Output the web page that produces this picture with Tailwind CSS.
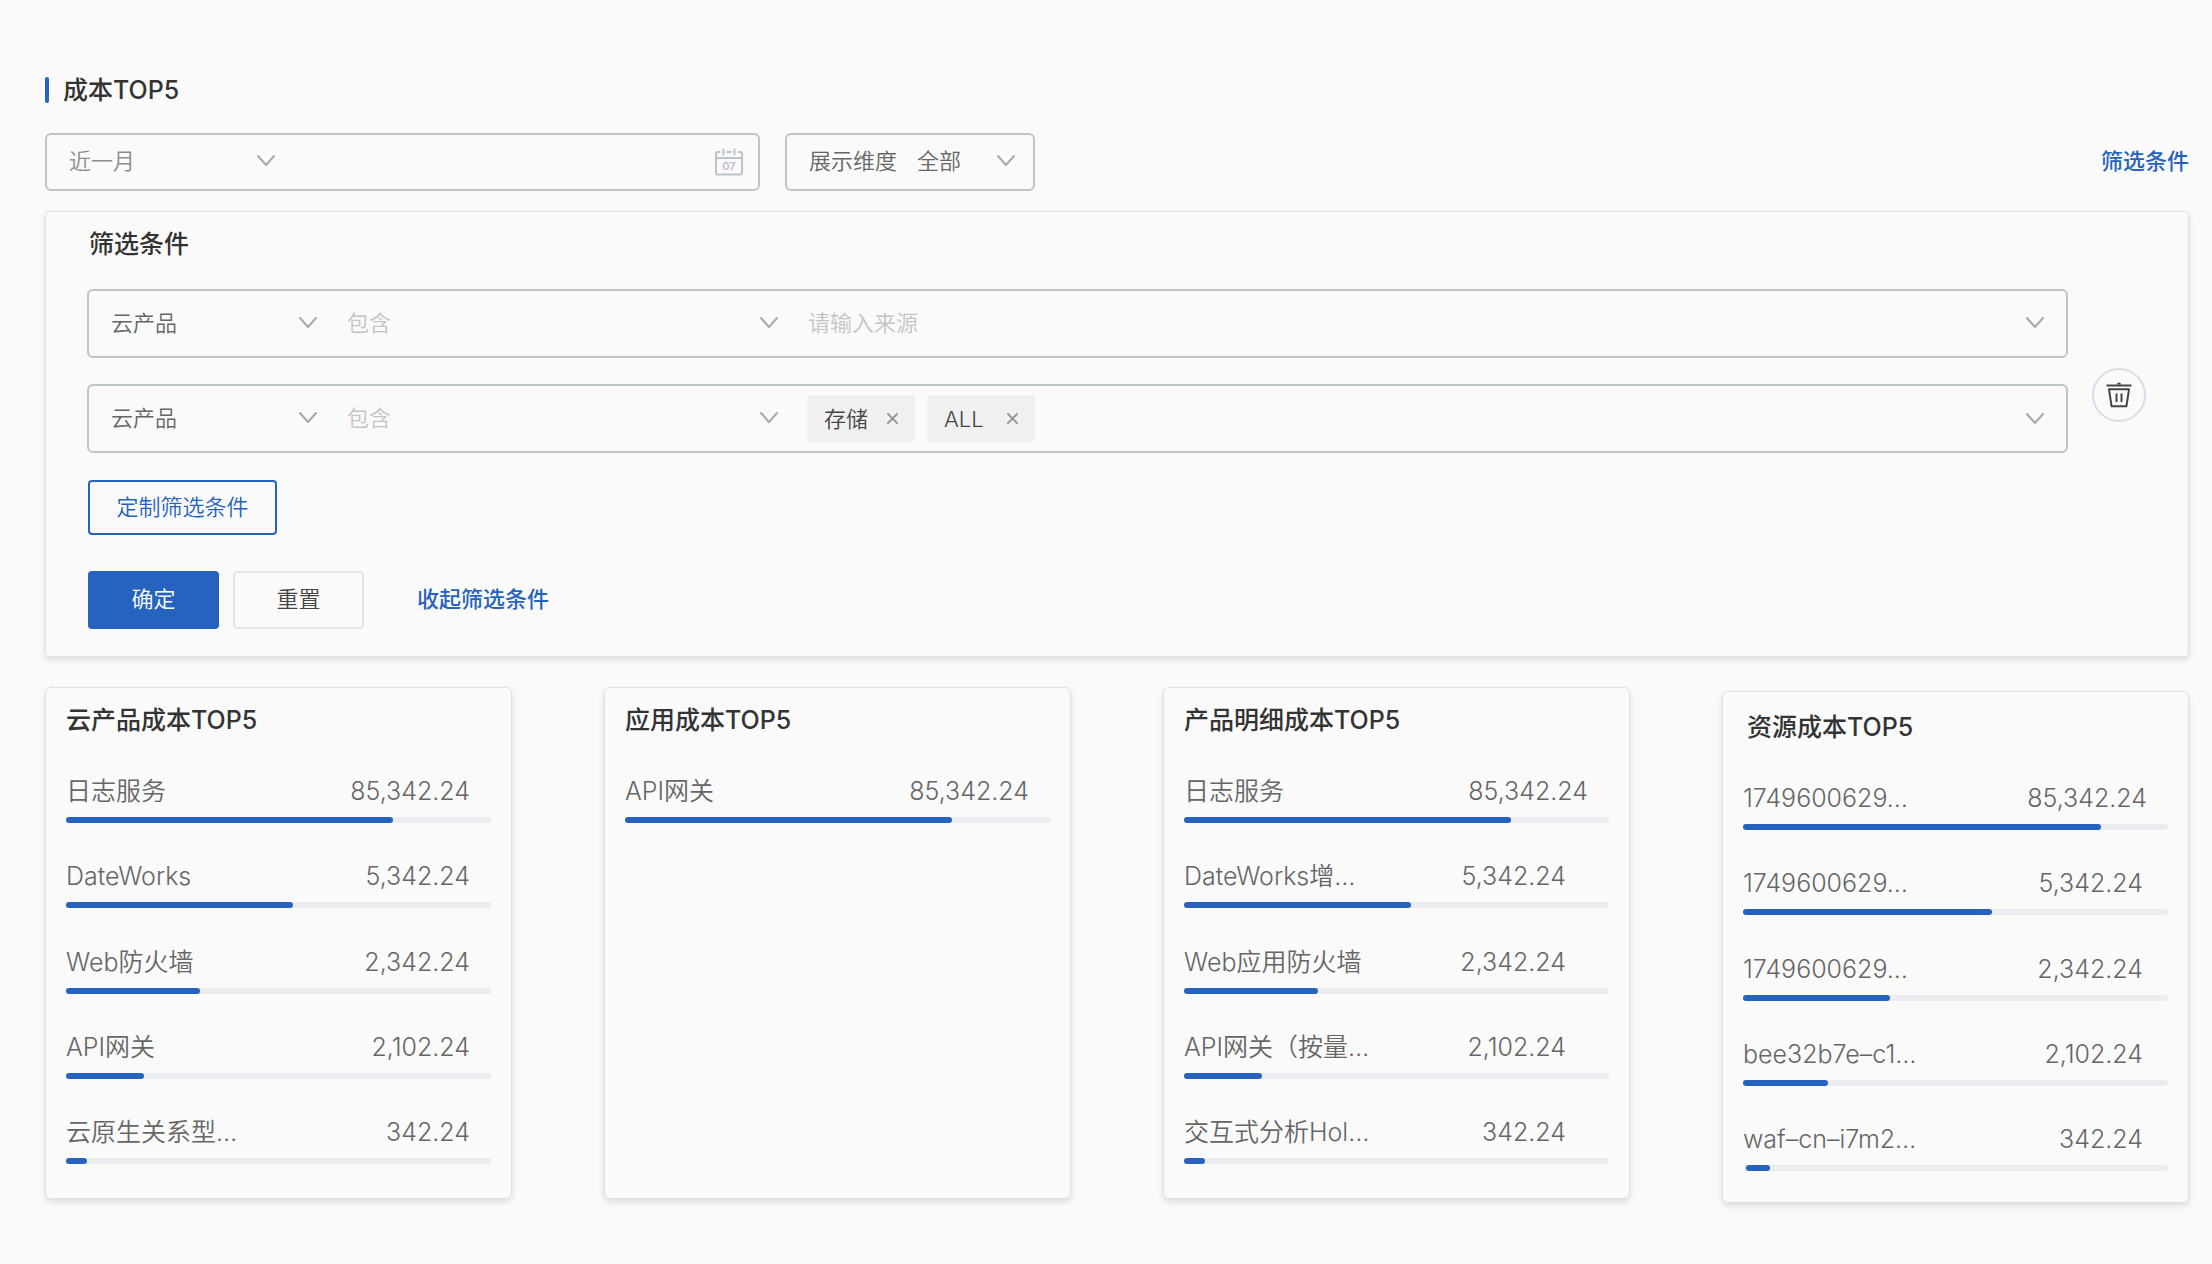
<!DOCTYPE html>
<html lang="zh-CN">
<head>
    <meta charset="UTF-8">
    <meta name="viewport" content="width=device-width, initial-scale=1.0">
    <title>成本TOP5</title>
    <script src="https://cdn.jsdelivr.net/npm/@tailwindcss/browser@4"></script>
</head>
<body class="bg-[#fafafa] font-['Inter','Noto_Sans_CJK_SC',sans-serif] text-[22px] leading-8 font-[350] text-[#666]">
    <!-- Icons -->
    <svg class="hidden">
        <symbol id="chevron" viewBox="0 0 18 12">
            <path d="M1 1l8 9 8-9" fill="none" stroke="currentColor" stroke-width="2" stroke-linecap="round" stroke-linejoin="round" />
        </symbol>
        <symbol id="cross" viewBox="0 0 12 12">
            <path d="M1 1l10 10M11 1L1 11" fill="none" stroke="currentColor" stroke-width="2" stroke-linecap="round" />
        </symbol>
    </svg>

    <main class="pt-[74px] pb-16 pl-[45px] pr-[23px]">
        <h1 class="flex items-center gap-3.5 text-[25px] font-medium text-[#333]">
            <span class="w-1 h-[26px] rounded-sm bg-[#2563be]"></span>
            成本TOP5
        </h1>

        <!-- Toolbar -->
        <div class="mt-[27px] flex items-center">
            <div class="flex items-center w-[715px] h-[58px] border-2 border-[#bdc4ca] rounded-md">
                <label class="relative w-[236px] text-[#8c8c8c]">
                    <select aria-label="时间范围" class="w-full appearance-none pb-0.5 pl-[22px] pr-8 outline-none">
                        <option>近一月</option>
                    </select>
                    <svg class="absolute right-2 top-2.5 w-[18px] h-3 text-[#a9a9a9] pointer-events-none"><use href="#chevron" /></svg>
                </label>
                <input type="text" aria-label="日期" class="flex-1 min-w-0 px-4 outline-none">
                <button type="button" aria-label="选择日期" class="mr-[15px] text-[#bcc2cc]">
                    <svg class="w-7 h-7" viewBox="0 0 28 28" fill="none" stroke="currentColor" stroke-width="2" stroke-linecap="round">
                        <path d="M4.500 4H3a2 2 0 0 0-2 2v18.500a2 2 0 0 0 2 2h22a2 2 0 0 0 2-2V6a2 2 0 0 0-2-2h-1.500" />
                        <path d="M12 4h4M8.500 1.500v5M19.500 1.500v5M1 10h26" />
                        <text x="14" y="22" text-anchor="middle" font-size="11" font-weight="600" fill="currentColor" stroke="none">07</text>
                    </svg>
                </button>
            </div>
            <div class="ml-[25px] flex items-center w-[250px] h-[58px] border-2 border-[#bdc4ca] rounded-md">
                <label for="dimension" class="pb-0.5 pl-[22px] whitespace-nowrap">展示维度</label>
                <div class="relative flex-1">
                    <select id="dimension" class="w-full appearance-none pb-0.5 pl-5 pr-10 outline-none">
                        <option>全部</option>
                    </select>
                    <svg class="absolute right-[18px] top-2.5 w-[18px] h-3 text-[#a9a9a9] pointer-events-none"><use href="#chevron" /></svg>
                </div>
            </div>
            <a href="#filters" class="ml-auto pb-0.5 font-medium text-[#2563be]">筛选条件</a>
        </div>

        <!-- Filter panel -->
        <section id="filters" class="mt-5 pt-4 pb-[27px] pl-[41px] pr-[42px] border border-[#dde0e2] rounded-sm shadow-[0_3px_6px_rgba(0,0,0,0.12)]">
            <h2 class="pl-0.5 text-[25px] font-medium text-[#333]">筛选条件</h2>
            <div class="mt-[29px] flex items-center gap-6">
                <div class="flex-1 flex flex-col gap-[26px]">
                    <div class="flex items-center h-[69px] border-2 border-[#bdc4ca] rounded-md">
                        <label class="relative w-[236px]">
                            <select aria-label="条件字段" class="w-full appearance-none pb-0.5 pl-[22px] pr-8 outline-none">
                                <option>云产品</option>
                            </select>
                            <svg class="absolute right-2 top-2.5 w-[18px] h-3 text-[#a9a9a9] pointer-events-none"><use href="#chevron" /></svg>
                        </label>
                        <label class="relative w-[461px] text-[#c4c4c4]">
                            <select aria-label="匹配方式" class="w-full appearance-none pb-0.5 pl-[22px] pr-8 outline-none">
                                <option>包含</option>
                            </select>
                            <svg class="absolute right-2 top-2.5 w-[18px] h-3 text-[#a9a9a9] pointer-events-none"><use href="#chevron" /></svg>
                        </label>
                        <label class="relative flex-1 text-[#c4c4c4]">
                            <select aria-label="来源" class="w-full appearance-none pb-0.5 pl-[22px] pr-12 outline-none">
                                <option>请输入来源</option>
                            </select>
                            <svg class="absolute right-[22px] top-2.5 w-[18px] h-3 text-[#a9a9a9] pointer-events-none"><use href="#chevron" /></svg>
                        </label>
                    </div>
                    <div class="flex items-center h-[69px] border-2 border-[#bdc4ca] rounded-md">
                        <label class="relative w-[236px]">
                            <select aria-label="条件字段" class="w-full appearance-none pb-0.5 pl-[22px] pr-8 outline-none">
                                <option>云产品</option>
                            </select>
                            <svg class="absolute right-2 top-2.5 w-[18px] h-3 text-[#a9a9a9] pointer-events-none"><use href="#chevron" /></svg>
                        </label>
                        <label class="relative w-[461px] text-[#c4c4c4]">
                            <select aria-label="匹配方式" class="w-full appearance-none pb-0.5 pl-[22px] pr-8 outline-none">
                                <option>包含</option>
                            </select>
                            <svg class="absolute right-2 top-2.5 w-[18px] h-3 text-[#a9a9a9] pointer-events-none"><use href="#chevron" /></svg>
                        </label>
                        <div class="flex-1 flex items-center gap-3 pl-[21px] pr-[22px] text-[#444]">
                            <span class="flex items-center justify-between w-[108px] h-[47px] px-[17px] rounded bg-[#f0f0f0]">
                                存储
                                <button type="button" aria-label="移除存储" class="text-[#8d929b]"><svg class="w-[11px] h-[11px]"><use href="#cross" /></svg></button>
                            </span>
                            <span class="flex items-center justify-between w-[108px] h-[47px] px-[17px] rounded bg-[#f0f0f0]">
                                ALL
                                <button type="button" aria-label="移除ALL" class="text-[#8d929b]"><svg class="w-[11px] h-[11px]"><use href="#cross" /></svg></button>
                            </span>
                            <button type="button" aria-label="展开" class="ml-auto text-[#a9a9a9]"><svg class="w-[18px] h-3"><use href="#chevron" /></svg></button>
                        </div>
                    </div>
                </div>
                <button type="button" aria-label="删除" class="mt-12 flex items-center justify-center w-[54px] h-[54px] border-2 border-[#d9dde7] rounded-full text-[#444]">
                    <svg class="w-[26px] h-[26px]" viewBox="0 0 26 26" fill="none" stroke="currentColor" stroke-width="2">
                        <path d="M.5 3.500h25" />
                        <path d="M11 2.500a2 2 0 0 1 4 0z" fill="currentColor" stroke="none" />
                        <path d="M3 7.300h20l-2.600 17H5.600z" stroke-linejoin="round" />
                        <path d="M10.500 11.500v8.500M15.500 11.500v8.500" />
                    </svg>
                </button>
            </div>
            <button type="button" class="mt-[27px] ml-px block w-[189px] h-[55px] pb-0.5 border-2 border-[#2563be] rounded text-[#2563be]">定制筛选条件</button>
            <div class="mt-9 ml-px flex items-center">
                <button type="button" class="w-[131px] h-[58px] pb-0.5 rounded bg-[#2563be] text-white">确定</button>
                <button type="button" class="ml-3.5 w-[131px] h-[58px] pb-0.5 border-2 border-[#e2e4e6] rounded text-[#444]">重置</button>
                <a href="#" class="ml-[53px] pb-0.5 font-medium text-[#2563be]">收起筛选条件</a>
            </div>
        </section>

        <!-- TOP5 cards -->
        <div id="cards" class="mt-[30px] grid grid-cols-4 gap-[92px]"></div>
    </main>

    <script>
        // rows: [name, cost, bar percent, bar start]
        const cards = [
            {
                title: '云产品成本TOP5',
                rows: [
                    ['日志服务', '85,342.24', 77],
                    ['DateWorks', '5,342.24', 53.5],
                    ['Web防火墙', '2,342.24', 31.6],
                    ['API网关', '2,102.24', 18.4],
                    ['云原生关系型…', '342.24', 5]
                ]
            },
            {
                title: '应用成本TOP5',
                rows: [
                    ['API网关', '85,342.24', 77]
                ]
            },
            {
                title: '产品明细成本TOP5',
                restClass: 'pr-[43px]',
                rows: [
                    ['日志服务', '85,342.24', 77],
                    ['DateWorks增…', '5,342.24', 53.5],
                    ['Web应用防火墙', '2,342.24', 31.6],
                    ['API网关（按量…', '2,102.24', 18.4],
                    ['交互式分析Hol…', '342.24', 5]
                ]
            },
            {
                title: '资源成本TOP5',
                cardClass: 'mt-1 -mb-1 pt-[19px]',
                titleClass: 'pl-1',
                restClass: 'pr-[25px]',
                rows: [
                    ['1749600629…', '85,342.24', 84.3],
                    ['1749600629…', '5,342.24', 58.7],
                    ['1749600629…', '2,342.24', 34.6],
                    ['bee32b7e–c1…', '2,102.24', 20],
                    ['waf–cn–i7m2…', '342.24', 5.6, 0.8]
                ]
            }
        ];

        function renderRow(row, i, card) {
            const [name, cost, percent, start = 0] = row;
            const costClass = i > 0 && card.restClass ? card.restClass : 'pr-[21px]';
            return `
                <li>
                    <div class="flex justify-between whitespace-nowrap ${costClass}">
                        <span>${name}</span>
                        <span>${cost}</span>
                    </div>
                    <div class="mt-2.5 h-1.5 rounded-full bg-[#ebecf0]">
                        <div class="h-1.5 rounded-full bg-[#2563be]" style="width: ${percent}%; margin-left: ${start}%"></div>
                    </div>
                </li>`;
        }

        document.getElementById('cards').innerHTML = cards.map(card => `
            <section class="min-h-[512px] ${card.cardClass || 'pt-4'} px-5 border border-[#dde0e2] rounded-md shadow-[0_3px_6px_rgba(0,0,0,0.12)]">
                <h2 class="${card.titleClass || ''} text-[25px] font-medium text-[#333]">${card.title}</h2>
                <ul class="mt-[39px] h-[389px] flex flex-col justify-between text-[25px]">${card.rows.map((row, i) => renderRow(row, i, card)).join('')}</ul>
            </section>`).join('');
    </script>
</body>
</html>
